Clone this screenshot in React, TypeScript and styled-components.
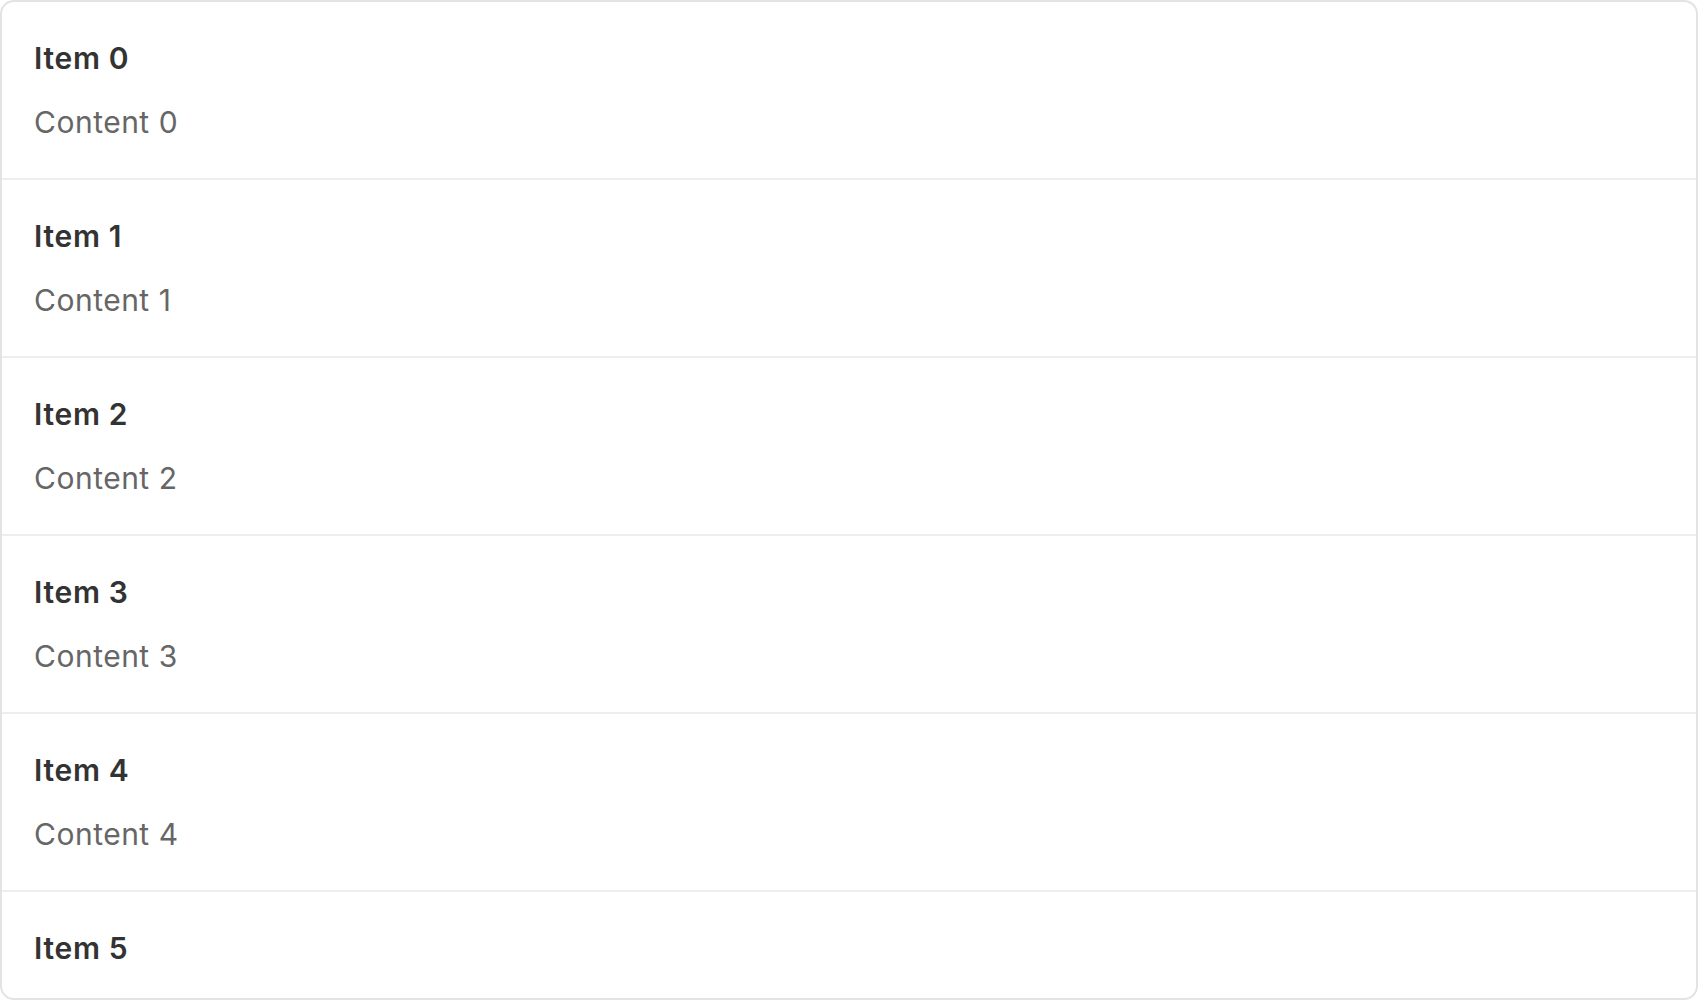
import React from "react";
import styled, { createGlobalStyle } from "styled-components";

const GlobalStyle = createGlobalStyle`
  html, body {
    margin: 0;
    padding: 0;
    background: #ffffff;
    font-family: Inter, "Noto Sans", sans-serif;
  }
`;

const List = styled.div`
  box-sizing: border-box;
  width: 100%;
  height: 1000px;
  border: 2px solid #e3e3e3;
  border-radius: 14px;
  overflow: hidden;
  background: #ffffff;
`;

const Row = styled.div`
  display: flex;
  flex-direction: column;
  gap: 16px;
  padding: 32px;
  border-bottom: 2px solid #eeeeee;
`;

const Title = styled.div`
  font-size: 30px;
  line-height: 48px;
  font-weight: 600;
  letter-spacing: 0.7px;
  color: #333333;
`;

const Content = styled.div`
  font-size: 30px;
  line-height: 48px;
  font-weight: 400;
  letter-spacing: 0.5px;
  color: #666666;
`;

const items = Array.from({ length: 6 }, (_, i) => i);

export default function App() {
  return (
    <>
      <GlobalStyle />
      <List>
        {items.map((i) => (
          <Row key={i}>
            <Title>Item {i}</Title>
            <Content>Content {i}</Content>
          </Row>
        ))}
      </List>
    </>
  );
}
